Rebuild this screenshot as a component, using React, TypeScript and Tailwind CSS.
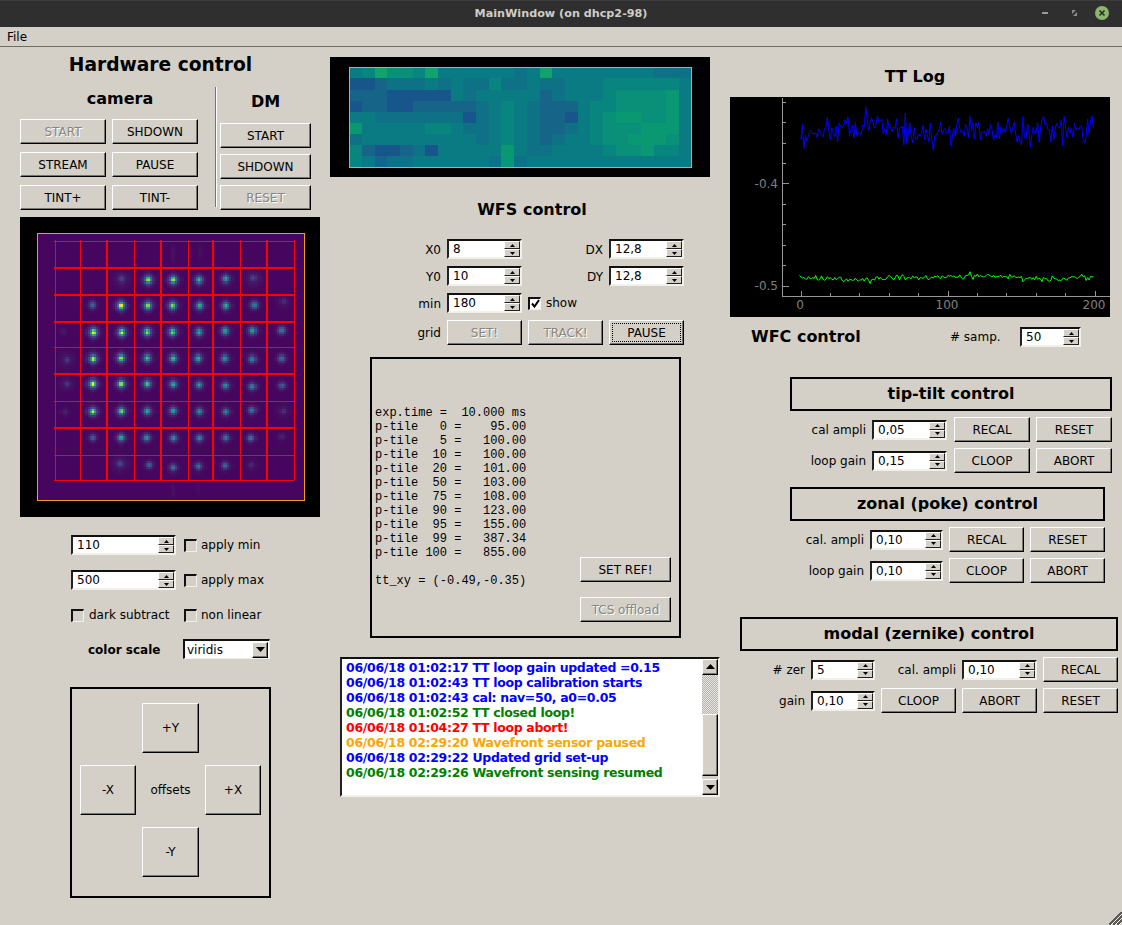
import React from "react";

const raised =
  "flex items-center justify-center shrink-0 border border-t-white border-l-white border-r-black border-b-black shadow-[inset_-1px_-1px_0_#77756f]";

function Btn({ label, className = "", disabled = false, focus = false }: { label: string; className?: string; disabled?: boolean; focus?: boolean }) {
  return (
    <div
      className={`${raised} ${className} ${disabled ? "text-[#87857f] [text-shadow:1px_1px_0_#fff]" : "text-black"} ${
        focus ? "outline-1 outline-dotted -outline-offset-4 outline-black" : ""
      }`}
    >
      {label}
    </div>
  );
}

function Arrow({ down = false, size = "small" }: { down?: boolean; size?: "small" | "big" }) {
  return size === "small" ? (
    <svg width="5" height="3" viewBox="0 0 5 3">
      <polygon points={down ? "0,0 5,0 2.5,3" : "2.5,0 5,3 0,3"} fill="#000" />
    </svg>
  ) : (
    <svg width="9" height="5" viewBox="0 0 9 5">
      <polygon points={down ? "0,0 9,0 4.5,5" : "4.5,0 9,5 0,5"} fill="#000" />
    </svg>
  );
}

function SpinBtn({ down = false }: { down?: boolean }) {
  return (
    <div className="flex items-center justify-center w-[16px] h-[8px] bg-[#d4d0c8] border-t border-l border-t-white border-l-white border-b border-r border-b-[#222] border-r-[#222]">
      <Arrow down={down} />
    </div>
  );
}

function Spin({ value, className = "" }: { value: string; className?: string }) {
  return (
    <div
      className={`flex items-center shrink-0 h-[20px] bg-white border-t-2 border-l-2 border-t-[#111] border-l-[#222] border-r-2 border-b-2 border-r-[#f2f0ea] border-b-[#f2f0ea] ${className}`}
    >
      <span className="pl-[4px] leading-none">{value}</span>
      <div className="ml-auto flex flex-col gap-[0px]">
        <SpinBtn />
        <SpinBtn down />
      </div>
    </div>
  );
}

function Check({ checked = false }: { checked?: boolean }) {
  return (
    <div
      className={`flex items-center justify-center shrink-0 w-[13px] h-[13px] border-t-2 border-l-2 border-r border-b border-t-[#111] border-l-[#111] border-r-[#f2f0ea] border-b-[#f2f0ea] ${
        checked ? "bg-white" : "bg-[#d4d0c8]"
      }`}
    >
      {checked && (
        <svg width="9" height="9" viewBox="0 0 9 9">
          <path d="M1 4.5 L3.5 7.5 L8 1" fill="none" stroke="#000" strokeWidth="2" />
        </svg>
      )}
    </div>
  );
}

function TitleBox({ label, className = "" }: { label: string; className?: string }) {
  return (
    <div className={`flex items-center justify-center h-[34px] border-2 border-black font-bold text-[16px] ${className}`}>
      {label}
    </div>
  );
}

const stops = [
  [68, 1, 84],
  [72, 40, 120],
  [62, 74, 137],
  [49, 104, 142],
  [38, 130, 142],
  [31, 158, 137],
  [53, 183, 121],
  [109, 205, 89],
  [180, 222, 44],
  [253, 231, 37],
];
function viridis(t: number) {
  const v = Math.max(0, Math.min(0.9999, t)) * 9;
  const i = Math.floor(v);
  const f = v - i;
  const a = stops[i];
  const b = stops[i + 1];
  return `rgb(${a.map((c, k) => Math.round(c + (b[k] - c) * f)).join(",")})`;
}

// [x, y, amplitude] in reference zoom units
const spots: number[][] = [
  [335, 192, 0.2], [415, 195, 0.85], [490, 195, 0.85], [568, 195, 0.6], [648, 192, 0.55], [730, 190, 0.2],
  [247, 270, 0.3], [333, 272, 0.95], [414, 272, 0.8], [488, 272, 0.75], [570, 272, 0.58], [648, 272, 0.55], [733, 270, 0.38], [820, 260, 0.12],
  [160, 350, 0.05], [250, 352, 0.98], [335, 352, 0.9], [412, 351, 0.78], [488, 351, 0.75], [568, 351, 0.55], [646, 348, 0.55], [728, 347, 0.5], [815, 346, 0.36],
  [170, 434, 0.16], [249, 431, 0.9], [333, 429, 0.85], [412, 429, 0.65], [490, 430, 0.68], [565, 430, 0.6], [645, 430, 0.52], [727, 432, 0.45], [815, 430, 0.34],
  [170, 506, 0.15], [248, 506, 0.98], [333, 506, 0.92], [412, 506, 0.7], [490, 507, 0.6], [568, 509, 0.5], [647, 511, 0.48], [727, 514, 0.45], [816, 511, 0.28],
  [165, 591, 0.08], [248, 589, 0.85], [334, 588, 0.8], [412, 588, 0.58], [490, 587, 0.58], [569, 589, 0.48], [648, 590, 0.42], [726, 585, 0.4], [820, 588, 0.12],
  [248, 668, 0.3], [333, 668, 0.62], [410, 668, 0.5], [491, 669, 0.48], [569, 669, 0.45], [648, 668, 0.4], [723, 669, 0.38], [815, 665, 0.08],
  [330, 746, 0.22], [418, 750, 0.3], [490, 758, 0.36], [566, 754, 0.34], [646, 752, 0.33], [725, 750, 0.1],
];
const streaks: number[][] = [
  [490, 115, 0.04], [570, 110, 0.03], [490, 825, 0.035], [565, 822, 0.025],
];

function buildSensor() {
  const N = 128;
  const pitch = 267 / N;
  const ox = 17.5;
  const oy = 16.5;
  const field = new Float32Array(N * N);
  const add = (cx: number, cy: number, fn: (dx: number, dy: number) => number, r: number) => {
    const px = (cx - ox) / pitch;
    const py = (cy - oy) / pitch;
    for (let j = Math.max(0, Math.floor(py - r)); j <= Math.min(N - 1, Math.ceil(py + r)); j++) {
      for (let i = Math.max(0, Math.floor(px - r)); i <= Math.min(N - 1, Math.ceil(px + r)); i++) {
        field[j * N + i] += fn(i + 0.5 - px, j + 0.5 - py);
      }
    }
  };
  spots.forEach(([zx, zy, a]) => {
    const wide = a < 0.25 ? 1.7 : 1;
    add(zx / 3 - 10, zy / 3 - 2, (dx, dy) => {
      const r2 = dx * dx + dy * dy;
      return (
        a * 0.73 * Math.exp(-r2 / (2 * 0.9 * 0.9)) +
        a * 0.27 * Math.exp(-r2 / (2 * 1.85 * 1.85 * wide * wide)) +
        a * 0.08 * (Math.exp(-(dy * dy) / 1) * Math.exp(-Math.abs(dx) / 2.5) + Math.exp(-(dx * dx) / 1) * Math.exp(-Math.abs(dy) / 2.5))
      );
    }, 9);
  });
  streaks.forEach(([zx, zy, a]) => {
    add(zx / 3 - 10, zy / 3 - 2, (dx, dy) => a * Math.exp(-(dx * dx) / 2) * Math.exp(-(dy * dy) / 22), 10);
  });
  const rects: React.ReactElement[] = [];
  for (let j = 0; j < N; j++) {
    for (let i = 0; i < N; i++) {
      const t = field[j * N + i];
      if (t > 0.014) {
        rects.push(
          <rect key={j * N + i} x={ox + i * pitch} y={oy + j * pitch} width={pitch + 0.2} height={pitch + 0.2} fill={viridis(t + 0.01)} />
        );
      }
    }
  }
  return rects;
}

const gx = [34.5, 59.5, 86.5, 113.5, 140.5, 167.5, 192.5, 219.5, 246.5, 273.5];
const gy = [23.5, 50.5, 77.5, 104.5, 129.5, 156.5, 183.5, 210.5, 237.5, 262.5];
const gxThick = [86.5, 140.5, 192.5, 246.5];
const gyThick = [50.5, 77.5, 104.5, 156.5, 210.5];

function SensorImage() {
  return (
    <svg width="300" height="300" viewBox="0 0 300 300" className="block shrink-0" shapeRendering="crispEdges">
      <rect width="300" height="300" fill="#000" />
      <rect x="17.5" y="16.5" width="267" height="267" fill="#46065f" stroke="#f0a500" />
      {buildSensor()}
      {gx.map((x) => (
        <rect key={x} x={x - (gxThick.includes(x) ? 0.5 : 0)} y="23" width={gxThick.includes(x) ? 2 : 1} height="240" fill="#ff0000" />
      ))}
      {gy.map((y) => (
        <rect key={y} x="34" y={y - (gyThick.includes(y) ? 0.5 : 0)} width="240" height={gyThick.includes(y) ? 2 : 1} fill="#ff0000" />
      ))}
    </svg>
  );
}

const waveColors: Record<string, string> = {
  a: "#18558a",
  b: "#166488",
  c: "#0f7185",
  d: "#0a7b83",
  e: "#09857f",
  f: "#0a8f78",
  g: "#0a9872",
  h: "#12a26b",
};
const waveRows = [
  "dehffehddddddcdhddddddddccc",
  "aabcccdcdcceccdccdddeeeeeed",
  "bbbaaaaadcdddddbcdddeffffgd",
  "abbaabbbbbcdedcbbbdeeffffgd",
  "ddcccccccacdedcbbadefggffgd",
  "gdddddeedccdedcbbcdefffgggd",
  "cdddddddddcdedcbcddeffgggfd",
  "ebaabcadddddgdccddddeffgeed",
  "edbccddddddcgcddddddddddddd",
];

function WaveImage() {
  const w = 342.4 / 27;
  const h = 100 / 9;
  return (
    <svg width="380" height="120" viewBox="0 0 380 120" className="block" shapeRendering="crispEdges">
      <rect width="380" height="120" fill="#000" />
      {waveRows.map((row, j) =>
        row.split("").map((c, i) => (
          <rect key={`${i}-${j}`} x={19.3 + i * w} y={10.3 + j * h} width={w + 0.4} height={h + 0.4} fill={waveColors[c]} />
        ))
      )}
      <rect x="19.5" y="10.5" width="342" height="100" fill="none" stroke="#e5a820" />
    </svg>
  );
}

function rng(seed: number) {
  let s = seed;
  return () => {
    s = (s * 1664525 + 1013904223) % 4294967296;
    return s / 4294967296;
  };
}

function lerpEnv(env: number[][], i: number) {
  for (let k = 0; k < env.length - 1; k++) {
    if (i <= env[k + 1][0]) {
      const f = (i - env[k][0]) / (env[k + 1][0] - env[k][0]);
      return env[k][1] + (env[k + 1][1] - env[k][1]) * f;
    }
  }
  return env[env.length - 1][1];
}

function series(seed: number, env: number[][], amp: number, dips: Record<number, number> = {}) {
  const r = rng(seed);
  const pts: string[] = [];
  for (let i = 0; i <= 200; i++) {
    const n = (r() + r() + r() - 1.5) * amp;
    const y = lerpEnv(env, i) + n + (dips[i] || 0);
    pts.push(`${(69.5 + i * 1.47).toFixed(1)},${y.toFixed(1)}`);
  }
  return pts.join(" ");
}

const blue = series(
  7,
  [[0, 37], [12, 36], [25, 31], [50, 28], [65, 33], [90, 36], [120, 33], [135, 37], [160, 32], [200, 34]],
  15,
  { 2: 6, 10: 13, 26: 8, 31: -9, 43: -8, 54: -10, 90: 15, 91: 16, 133: 8, 121: -6, 180: -8 }
);
const green = series(
  21,
  [[0, 181], [25, 182], [40, 184], [60, 181], [100, 180], [120, 178], [150, 181], [175, 183], [200, 179]],
  3
);

function Plot() {
  const yt = [4.7, 25.1, 45.6, 66, 86.4, 106.8, 127.3, 147.7, 168.1, 188.5];
  const xt = [70.5, 99.8, 129.3, 158.7, 188.1, 217.6, 247, 276.4, 305.9, 335.3, 364.5];
  return (
    <svg width="380" height="220" viewBox="0 0 380 220" className="block">
      <rect width="380" height="220" fill="#000" />
      <g shapeRendering="crispEdges" stroke="#969696" strokeWidth="1">
        <line x1="52.5" y1="1" x2="52.5" y2="200" />
        <line x1="52" y1="199.5" x2="380" y2="199.5" />
        {yt.map((y, i) => (
          <line key={i} x1="52" y1={Math.round(y) + 0.5} x2={i === 4 || i === 9 ? 59 : 56} y2={Math.round(y) + 0.5} />
        ))}
        {xt.map((x, i) => (
          <line key={i} x1={Math.round(x) + 0.5} y1="199" x2={Math.round(x) + 0.5} y2={i % 5 === 0 ? 194 : 196} />
        ))}
      </g>
      <polyline points={blue} fill="none" stroke="#0000ff" strokeWidth="1" />
      <polyline points={green} fill="none" stroke="#00ff00" strokeWidth="1" />
      <g fill="#808080" fontSize="12" fontFamily="'DejaVu Sans', sans-serif">
        <text x="48" y="90.5" textAnchor="end">-0.4</text>
        <text x="48" y="192.5" textAnchor="end">-0.5</text>
        <text x="70" y="211.5" textAnchor="middle">0</text>
        <text x="217" y="211.5" textAnchor="middle">100</text>
        <text x="364" y="211.5" textAnchor="middle">200</text>
      </g>
    </svg>
  );
}

const logs: [string, string][] = [
  ["06/06/18 01:02:17 TT loop gain updated =0.15", "text-[#0000ff]"],
  ["06/06/18 01:02:43 TT loop calibration starts", "text-[#0000ff]"],
  ["06/06/18 01:02:43 cal: nav=50, a0=0.05", "text-[#0000ff]"],
  ["06/06/18 01:02:52 TT closed loop!", "text-[#008000]"],
  ["06/06/18 01:04:27 TT loop abort!", "text-[#ff0000]"],
  ["06/06/18 02:29:20 Wavefront sensor paused", "text-[#ffa500]"],
  ["06/06/18 02:29:22 Updated grid set-up", "text-[#0000ff]"],
  ["06/06/18 02:29:26 Wavefront sensing resumed", "text-[#008000]"],
];

const stats = `exp.time =  10.000 ms
p-tile   0 =    95.00
p-tile   5 =   100.00
p-tile  10 =   100.00
p-tile  20 =   101.00
p-tile  50 =   103.00
p-tile  75 =   108.00
p-tile  90 =   123.00
p-tile  95 =   155.00
p-tile  99 =   387.34
p-tile 100 =   855.00

tt_xy = (-0.49,-0.35)`;

function ScrollBtn({ down = false }: { down?: boolean }) {
  return (
    <div className="flex items-center justify-center w-[16px] h-[16px] bg-[#d4d0c8] border border-t-white border-l-white border-r-black border-b-black shadow-[inset_-1px_-1px_0_#77756f]">
      <Arrow down={down} size="big" />
    </div>
  );
}

export default function App() {
  return (
    <div className="relative flex flex-col w-[1122px] h-[925px] overflow-hidden bg-[#d4d0c8] text-black text-[12px] font-['DejaVu_Sans',sans-serif]">
      {/* Title bar */}
      <div className="relative flex items-center justify-center h-[27px] shrink-0 bg-[#2f2f2f] border-t border-t-[#3c3c3c] font-bold text-[11.2px] text-[#cfcdc6]">
        MainWindow (on dhcp2-98)
        <svg width="90" height="27" viewBox="0 0 90 27" className="absolute right-0 top-[-1px]">
          <rect x="10" y="12" width="6" height="2" fill="#9a9a9a" />
          <path d="M40 14 L40 10 L44 10 Z M45 12 L45 16 L41 16 Z" fill="#8c8c8c" />
          <circle cx="70" cy="13" r="7" fill="#8db56d" />
          <path d="M67.5 10.5 L72.5 15.5 M72.5 10.5 L67.5 15.5" stroke="#26301e" strokeWidth="1.6" />
        </svg>
      </div>
      {/* Menu */}
      <div className="flex items-center h-[20px] shrink-0 pl-[7px] border-b border-b-[#6e6d68]">File</div>

      <div className="flex flex-1">
        {/* Left column */}
        <div className="flex flex-col w-[330px] pl-[20px] shrink-0">
          <div className="mt-[6px] h-[24px] w-[281px] flex items-center justify-center font-bold text-[18.67px] leading-none">Hardware control</div>
          <div className="flex mt-[10px] h-[123px]">
            <div className="flex flex-col w-[178px]">
              <div className="mt-[1px] h-[22px] pl-[22px] flex items-center justify-center font-bold text-[16px]">camera</div>
              <div className="grid grid-cols-[86px_86px] gap-x-[6px] gap-y-[8px] mt-[9px]">
                <Btn label="START" disabled className="h-[25px]" />
                <Btn label="SHDOWN" className="h-[25px]" />
                <Btn label="STREAM" className="h-[25px]" />
                <Btn label="PAUSE" className="h-[25px]" />
                <Btn label="TINT+" className="h-[25px]" />
                <Btn label="TINT-" className="h-[25px]" />
              </div>
            </div>
            <div className="ml-[17px] mr-[3px] w-[2px] h-[120px] border-l border-l-[#77756f] border-r border-r-white" />
            <div className="flex flex-col w-[91px]">
              <div className="mt-[4px] h-[22px] flex items-center justify-center font-bold text-[16px]">DM</div>
              <div className="flex flex-col gap-[6px] mt-[10px]">
                <Btn label="START" className="h-[25px]" />
                <Btn label="SHDOWN" className="h-[25px]" />
                <Btn label="RESET" disabled className="h-[25px]" />
              </div>
            </div>
          </div>
          <div className="mt-[7px]">
            <SensorImage />
          </div>
          <div className="flex items-center mt-[18px] ml-[51px] h-[20px]">
            <Spin value="110" className="w-[105px]" />
            <div className="ml-[8px]"><Check /></div>
            <span className="ml-[4px]">apply min</span>
          </div>
          <div className="flex items-center mt-[15px] ml-[51px] h-[20px]">
            <Spin value="500" className="w-[105px]" />
            <div className="ml-[8px]"><Check /></div>
            <span className="ml-[4px]">apply max</span>
          </div>
          <div className="flex items-center mt-[15px] ml-[51px] h-[20px]">
            <Check />
            <span className="ml-[5px] w-[95px]">dark subtract</span>
            <Check />
            <span className="ml-[4px]">non linear</span>
          </div>
          <div className="flex items-center mt-[14px] ml-[68px] h-[20px]">
            <span className="w-[95px] pt-[2px] font-bold">color scale</span>
            <div className="flex items-center w-[87px] h-[20px] bg-white border-t-2 border-l-2 border-t-[#111] border-l-[#111] border-r border-b border-r-[#f2f0ea] border-b-[#f2f0ea]">
              <span className="pl-[2px]">viridis</span>
              <div className="ml-auto mr-[1px] flex items-center justify-center w-[16px] h-[16px] bg-[#d4d0c8] border border-t-white border-l-white border-r-black border-b-black shadow-[inset_-1px_-1px_0_#77756f]">
                <Arrow down size="big" />
              </div>
            </div>
          </div>
          <div className="mt-[28px] ml-[50px] w-[201px] h-[211px] border-2 border-black pt-[14px] flex justify-center">
            <div className="grid grid-cols-[56px_57px_56px] grid-rows-[50px_50px_50px] gap-x-[6px] gap-y-[12px]">
              <div />
              <Btn label="+Y" />
              <div />
              <Btn label="-X" />
              <div className="flex items-center justify-center">offsets</div>
              <Btn label="+X" />
              <div />
              <Btn label="-Y" />
              <div />
            </div>
          </div>
        </div>

        {/* Middle column */}
        <div className="flex flex-col w-[400px] shrink-0">
          <div className="mt-[10px]">
            <WaveImage />
          </div>
          <div className="mt-[22px] h-[22px] w-[380px] pl-[24px] flex items-center justify-center font-bold text-[16px]">WFS control</div>
          <div className="mt-[18px] ml-[64px] grid grid-cols-[47px_75px_75px_75px] gap-x-[6px] gap-y-[7px] items-center w-fit">
            <span className="text-right pt-[2px]">X0</span>
            <Spin value="8" />
            <span className="text-right pt-[2px]">DX</span>
            <Spin value="12,8" />
            <span className="text-right pt-[2px]">Y0</span>
            <Spin value="10" />
            <span className="text-right pt-[2px]">DY</span>
            <Spin value="12,8" />
            <span className="text-right pt-[2px]">min</span>
            <Spin value="180" />
            <div className="flex items-center">
              <Check checked />
              <span className="ml-[5px]">show</span>
            </div>
            <div />
            <span className="text-right">grid</span>
            <Btn label="SET!" disabled className="h-[25px]" />
            <Btn label="TRACK!" disabled className="h-[25px]" />
            <Btn label="PAUSE" focus className="h-[25px]" />
          </div>
          <div className="mt-[12px] ml-[40px] w-[311px] h-[281px] border-2 border-black flex justify-between">
            <pre className="pt-[47px] pl-[3px] text-[12px] leading-[14px] font-['Liberation_Mono',monospace]">{stats}</pre>
            <div className="flex flex-col self-end gap-[15px] mr-[8px] mb-[14px]">
              <Btn label="SET REF!" className="w-[91px] h-[25px]" />
              <Btn label="TCS offload" disabled className="w-[91px] h-[25px]" />
            </div>
          </div>
          <div className="mt-[19px] ml-[10px] flex w-[380px] h-[140px] bg-white border-2 border-t-[#111] border-l-[#222] border-r-[#f2f0ea] border-b-[#f2f0ea]">
            <div className="flex-1 pl-[4px] pt-[1px] font-bold text-[12.5px] tracking-[-0.32px] leading-[15px]">
              {logs.map(([t, c], i) => (
                <div key={i} className={c}>{t}</div>
              ))}
            </div>
            <div className="flex flex-col w-[16px] mr-[0px]">
              <ScrollBtn />
              <div className="h-[39px] bg-[repeating-conic-gradient(#e8e6e0_0_25%,#b4b2ac_0_50%)] bg-[length:2px_2px]" />
              <div className="h-[63px] bg-[#d4d0c8] border border-t-white border-l-white border-r-black border-b-black shadow-[inset_-1px_-1px_0_#77756f]" />
              <div className="h-[3px] bg-[#d4d0c8]" />
              <ScrollBtn down />
            </div>
          </div>
        </div>

        {/* Right column */}
        <div className="flex flex-col flex-1 min-w-0">
          <div className="mt-[19px] h-[22px] w-[370px] flex items-center justify-center font-bold text-[16px]">TT Log</div>
          <div className="mt-[9px]">
            <Plot />
          </div>
          <div className="flex items-center mt-[10px] h-[20px] pl-[21px]">
            <span className="w-[199px] font-bold text-[16px]">WFC control</span>
            <span className="w-[70px]">#&nbsp;samp.</span>
            <Spin value="50" className="w-[61px]" />
          </div>

          <TitleBox label="tip-tilt control" className="mt-[30px] ml-[60px] w-[322px]" />
          <div className="flex items-center mt-[6px] ml-[60px] h-[25px]">
            <span className="w-[76px] text-right">cal ampli</span>
            <Spin value="0,05" className="ml-[6px] w-[75px]" />
            <Btn label="RECAL" className="ml-[7px] w-[76px] h-[25px]" />
            <Btn label="RESET" className="ml-[6px] w-[76px] h-[25px]" />
          </div>
          <div className="flex items-center mt-[6px] ml-[60px] h-[25px]">
            <span className="w-[76px] text-right">loop gain</span>
            <Spin value="0,15" className="ml-[6px] w-[75px]" />
            <Btn label="CLOOP" className="ml-[7px] w-[76px] h-[25px]" />
            <Btn label="ABORT" className="ml-[6px] w-[76px] h-[25px]" />
          </div>

          <TitleBox label="zonal (poke) control" className="mt-[14px] ml-[60px] w-[315px]" />
          <div className="flex items-center mt-[6px] ml-[60px] h-[25px]">
            <span className="w-[74px] text-right">cal. ampli</span>
            <Spin value="0,10" className="ml-[6px] w-[73px]" />
            <Btn label="RECAL" className="ml-[6px] w-[75px] h-[25px]" />
            <Btn label="RESET" className="ml-[6px] w-[75px] h-[25px]" />
          </div>
          <div className="flex items-center mt-[6px] ml-[60px] h-[25px]">
            <span className="w-[74px] text-right">loop gain</span>
            <Spin value="0,10" className="ml-[6px] w-[73px]" />
            <Btn label="CLOOP" className="ml-[6px] w-[75px] h-[25px]" />
            <Btn label="ABORT" className="ml-[6px] w-[75px] h-[25px]" />
          </div>

          <TitleBox label="modal (zernike) control" className="mt-[34px] ml-[10px] w-[378px]" />
          <div className="flex items-center mt-[6px] ml-[10px] h-[25px]">
            <span className="w-[65px] text-right">#&nbsp;zer</span>
            <Spin value="5" className="ml-[6px] w-[64px]" />
            <span className="w-[81px] text-right">cal. ampli</span>
            <Spin value="0,10" className="ml-[6px] w-[75px]" />
            <Btn label="RECAL" className="ml-[6px] w-[75px] h-[25px]" />
          </div>
          <div className="flex items-center mt-[6px] ml-[10px] h-[25px]">
            <span className="w-[65px] text-right">gain</span>
            <Spin value="0,10" className="ml-[6px] w-[64px]" />
            <Btn label="CLOOP" className="ml-[6px] w-[75px] h-[25px]" />
            <Btn label="ABORT" className="ml-[6px] w-[75px] h-[25px]" />
            <Btn label="RESET" className="ml-[6px] w-[75px] h-[25px]" />
          </div>
        </div>
      </div>

      {/* Size grip */}
      <svg width="13" height="13" viewBox="0 0 13 13" className="absolute right-0 bottom-0" shapeRendering="crispEdges">
        <path d="M0 13 L13 0 M4 13 L13 4 M8 13 L13 8" stroke="#5a5955" strokeWidth="1.5" />
        <path d="M2 13 L13 2 M6 13 L13 6 M10 13 L13 10" stroke="#f4f2ec" strokeWidth="1" />
      </svg>
    </div>
  );
}
